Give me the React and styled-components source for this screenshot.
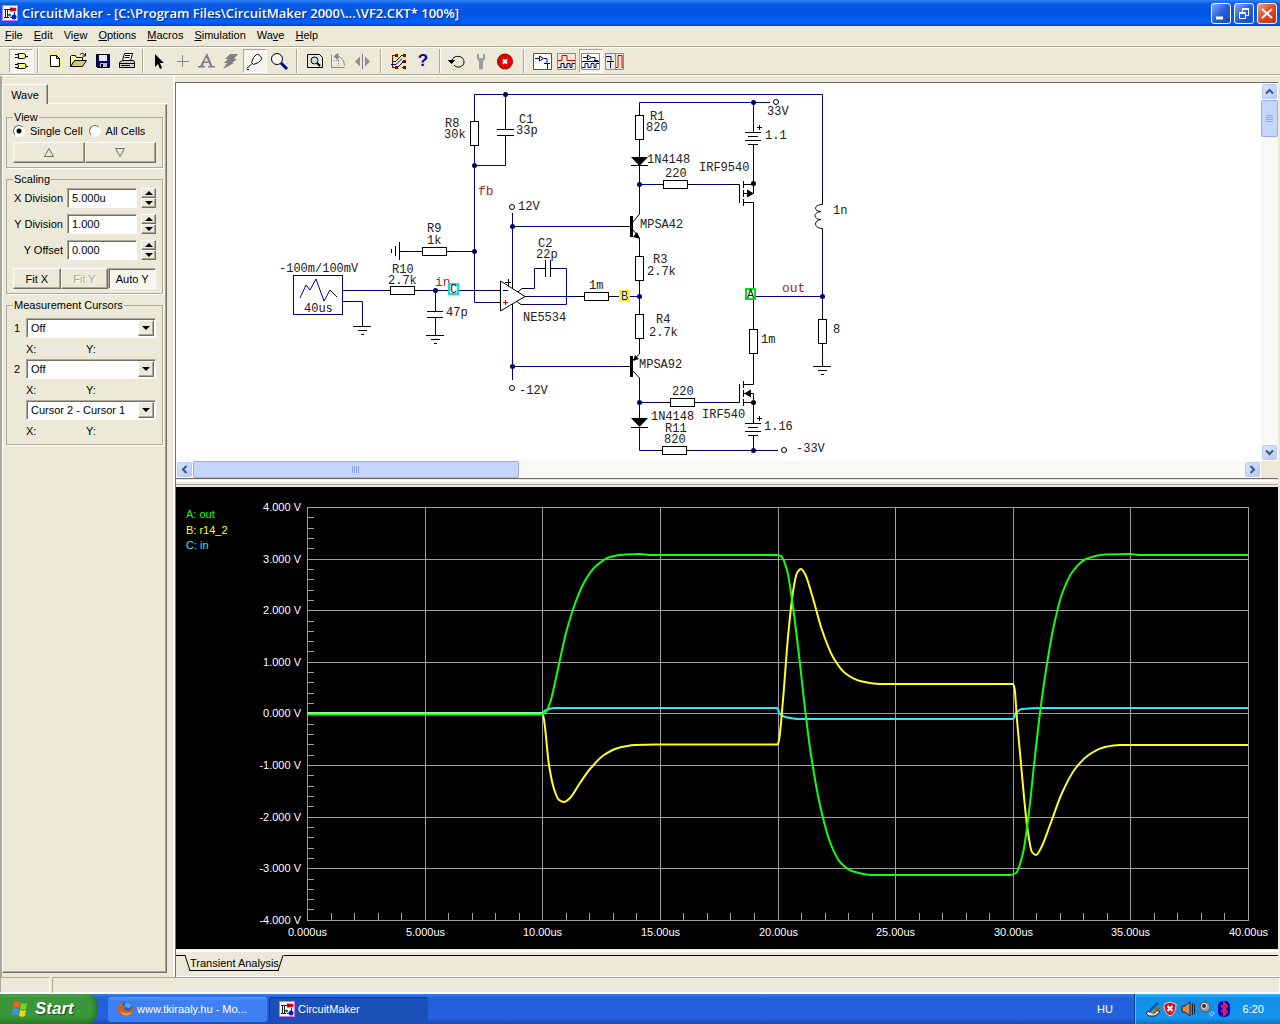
import { useState } from 'react';
import styled, { createGlobalStyle, css } from 'styled-components';

const MENUS = [
    ['', 'F', 'ile'], ['', 'E', 'dit'], ['Vi', 'e', 'w'], ['', 'O', 'ptions'],
    ['', 'M', 'acros'], ['', 'S', 'imulation'], ['Wa', 'v', 'e'], ['', 'H', 'elp'],
];

/* ---------- toolbar icons ---------- */

const ICONS = {
    gates: (
        <g fill="#ffff80" stroke="#000">
            <path d="M7.500 2.500h5l2 1v3l-2 1h-5zM6.500 12.500h7l1.500 1v3l-1.500 1h-7l1-2.500z" />
            <path d="M4 3.500h3M4 6.500h3M15 5.500h2M4 13.500h3M4 16.500h3M15 15.500h2" />
        </g>
    ),
    new: (
        <g>
            <path d="M3 3l3 3M10 1v3M17 4l-2 2M2 10h3M18 11h-3M4 17l2-2M16 17l-2-2" stroke="#ffff30" strokeWidth="2" />
            <path d="M5.500 4.500h6l3 3v8h-9zM11.500 4.500v3h3" fill="#fff" stroke="#000" />
        </g>
    ),
    open: (
        <g stroke="#000">
            <path d="M1.500 15.500v-10l1-1h4l1 2h6v3" fill="#ffff90" />
            <path d="M1.500 15.500l4-6h12l-4 6z" fill="#d8c860" />
            <path d="M11 3.500c2-2 4-1 5 1M16.500 2v3h-3" fill="none" />
        </g>
    ),
    save: (
        <g>
            <path d="M3.500 3.500h13v13h-12l-1-1z" fill="#000090" stroke="#000" />
            <path d="M6 4h8v6H6z" fill="#e8e8e8" />
            <path d="M7 12h7v4H7z" fill="#c0c0c0" />
            <path d="M8 13h2v3H8z" fill="#000" />
        </g>
    ),
    print: (
        <g stroke="#000">
            <path d="M5.500 9.500l2-7h8l-2 7z" fill="#fff" />
            <path d="M8 4.500h5M7.500 6.500h5" />
            <path d="M2.500 11.500l3-2h11l1 2v5h-15z" fill="#d4d0c8" />
            <path d="M2.500 12.500h15M4 14.500h9" fill="none" />
        </g>
    ),
    arrow: <path d="M6 3v13l3-3 2 5 2-1-2-5h4z" fill="#000" />,
    plus: <path d="M9.500 4v12M4 10.500h12" stroke="#888" />,
    text: <path d="M10 2l5.500 13H18v1.500h-7V15h2l-1-3H7l-1 3h2v1.500H1V15h2zM9 6.500L7.500 10.500h4z" fill="#808080" fillRule="evenodd" />,
    bolt: <path d="M9 3h8l-4 5h3l-5 4h2L2 18l4-6H3l4-4H4z" fill="#808080" />,
    probe: (
        <g fill="none" stroke="#000">
            <path d="M2 17.500l5-5M6.500 11.500l2 2 5-2 3-3c1-2-3-6-5-5l-3 3z" />
            <path d="M2 18.500h2" />
        </g>
    ),
    zoom: (
        <g>
            <circle cx="8" cy="8" r="5.500" fill="#f8f8f0" stroke="#000" />
            <path d="M12 12l6 6" stroke="#0000a0" strokeWidth="3" />
        </g>
    ),
    page: (
        <g fill="none" stroke="#000">
            <path d="M2.500 3.500h12l3 3v10h-15z" />
            <circle cx="9.500" cy="9.500" r="3.500" fill="#c8e0e0" />
            <path d="M12 12l3 3" strokeWidth="2" />
        </g>
    ),
    rotate: (
        <g fill="none" stroke="#888">
            <path d="M2.500 3.500v13M2.500 16.500h13M5 5.500h4c4 1 6 4 6.500 9" />
            <path d="M5 5.500l4-3v6z" fill="#888" />
            <path d="M5 9.500h5M9.500 10v6" strokeDasharray="1 1" />
        </g>
    ),
    mirror: (
        <g>
            <path d="M2 10.500l5-5v10zM17 10.500l-5-5v10z" fill="#909090" />
            <path d="M9.500 3v15" stroke="#808080" />
        </g>
    ),
    digital: (
        <g fill="none">
            <path d="M3 4h13M3 10h13M3 16h13" stroke="#ffff40" strokeWidth="5" opacity=".5" />
            <path d="M3 4.500h4M3 10.500h4M3 16.500h4M13 4.500h3M13 10.500h3M13 16.500h3M3.500 4v13" stroke="#900000" />
            <path d="M2 13.500h5l6-6M7 10l6-6M9 16l5-5" stroke="#0000a0" />
            <path d="M6 3h3v3H6zM14 3h3v3h-3zM14 9h3v3h-3zM14 15h3v3h-3zM6 15h3v3H6z" fill="#900000" />
        </g>
    ),
    reset: (
        <g fill="none" stroke="#000">
            <path d="M5 11c-1-7 12-8 12 0 0 5-7 7-10 3" />
            <path d="M1.500 9.500h6l-3 3z" fill="#000" />
        </g>
    ),
    wrench: <path d="M6 3v5l2 2.500V17c0 2 4 2 4 0v-6.500L14 8V3h-2v4H8V3z" fill="#a0a09a" />,
    stop: (
        <g>
            <circle cx="10" cy="10.500" r="7.500" fill="#e80000" stroke="#900000" />
            <path d="M8 8.500l4 4M12 8.500l-4 4" stroke="#fff" strokeWidth="2" />
        </g>
    ),
    scopeA: (
        <g fill="#fff" stroke="#000080">
            <path d="M.500 2.500h18v16H.500z" stroke="#555" />
            <path d="M2 7.500h4M6.500 5v5l4-2.500zM11 7.500h3v4M11 12.500h6M13 11.500v1M14.500 13v5" />
        </g>
    ),
    scopeB: (
        <g fill="none">
            <path d="M.500 2.500h18v16H.500z" stroke="#888" />
            <path d="M1 9.500h4v-5h5v5h8" stroke="#d00000" />
            <path d="M1 16.500h3v-4h3v4h3v-4h3v4h2v-4h3" stroke="#000080" />
        </g>
    ),
    scopeC: (
        <g fill="none" stroke="#000080">
            <path d="M.500 2.500h18v16H.500z" stroke="#888" fill="#fff" />
            <path d="M2 6.500h4M6.500 4v5l4-2.500zM11 6.500h3v3M1 10.500h17M13 9.500h4M1 16.500h3v-4h3v4h3v-4h3v4h2v-4h3" />
        </g>
    ),
    scopeD: (
        <g fill="none">
            <path d="M.500 2.500h18v16H.500zM10.500 2v17" stroke="#888" />
            <path d="M1 5.500h5v4M2 10.500h7M5.500 11v6" stroke="#000080" />
            <path d="M11 16.500h2v-12h4v12h1" stroke="#d00000" />
        </g>
    ),
};

// each group: space taken by the separator before it, then its buttons
const TOOL_GROUPS = [
    { space: 0, tools: [['gates', true]] },
    { space: 10, tools: [['new'], ['open'], ['save'], ['print']] },
    { space: 8, tools: [['arrow'], ['plus'], ['text'], ['bolt'], ['probe', true], ['zoom']] },
    { space: 12, tools: [['page'], ['rotate'], ['mirror']] },
    { space: 12, tools: [['digital'], ['help']] },
    { space: 10, tools: [['reset'], ['wrench'], ['stop']] },
    { space: 14, tools: [['scopeA'], ['scopeB'], ['scopeC', true], ['scopeD']] },
];

function AppIcon() {
    return (
        <svg width="16" height="16" viewBox="0 0 16 16">
            <path d="M.500.500h15v15H.500z" fill="#fff" stroke="#e070d0" />
            <path d="M2 4.500h7M3.500 4v8M5.500 5v7M2 12.500h5" stroke="#222" fill="none" />
            <path d="M8 2.500h2c3 0 3 4 0 4H8z" fill="#c00020" />
            <circle cx="12.500" cy="4.500" r="2" fill="#e00020" />
            <circle cx="7.500" cy="10" r="1.500" fill="#008040" />
            <circle cx="12" cy="12" r="2.500" fill="#0020d0" />
            <path d="M8 12.500h3M12.500 7v3" stroke="#0020d0" />
        </svg>
    );
}

function ToolIcon({ name }) {
    if (name === 'help') return <HelpMark>?</HelpMark>;
    return <svg width="20" height="20" viewBox="0 0 20 20">{ICONS[name]}</svg>;
}

/* ---------- circuit ---------- */

const WIRES = [
    'M474.500 115V94.500H822.500V198', 'M505.500 94V122', 'M505.500 143V165.500H474.500', 'M474.500 152V302.500H494',
    'M407 251.500H416M453 251.500H474', 'M512.500 213V282M512.500 309V380', 'M512.500 226.500H618M512.500 366.500H622',
    'M343 290.500H384M421 290.500H494', 'M349 301.500H362.500V320', 'M435.500 290V305M435.500 323V331',
    'M527 288.500H534.500V268.500H540M555 268.500H566.500V304.500H528', 'M530 296.500H575M616 296.500H639',
    'M639.500 109V102.500H770', 'M639.500 145V152M639.500 171V214', 'M640 184.500H657M694 184.500H730',
    'M753.500 102V124M753.500 150V176M753.500 208V323M753.500 359V376', 'M639.500 245V251M639.500 286V308M639.500 345V349',
    'M756 296.500H822', 'M822.500 233V314M822.500 350V360', 'M639.500 384V412M639.500 433V450.500H656',
    'M640 402.500H664M700 402.500H730', 'M693 450.500H778', 'M753.500 408V416M753.500 440V450',
];

const LEADS = [
    // capacitors
    'M505.500 122V129M497 129.500H514M497 135.500H514M505.500 136V143',
    'M435.500 305V311M427 311.500H443M427 317.500H443M435.500 318V323',
    'M540 268.500H545M545.500 260V277M550.500 260V277M551 268.500H555',
    // grounds
    'M407 251.500H399M399.500 242V260M395.500 246V256M391.500 249V253',
    'M362.500 320V326M353 326.500H371M358 330.500H367M361 334.500H364',
    'M435.500 331V335M426 335.500H444M431 339.500H440M434 343.500H437',
    'M822.500 360V366M813 366.500H831M818 370.500H827M821 374.500H824',
    // resistor leads
    'M474.500 115V121M474.500 146V152', 'M416 251.500H422M447 251.500H453', 'M384 290.500H390M415 290.500H421',
    'M639.500 109V115M639.500 139V145', 'M657 184.500H663M688 184.500H694', 'M639.500 251V256M639.500 281V286',
    'M575 296.500H584M609 296.500H616', 'M639.500 308V314M639.500 339V345', 'M753.500 323V329M753.500 354V359',
    'M822.500 314V319M822.500 344V350', 'M664 402.500H670M695 402.500H700', 'M656 450.500H662M687 450.500H693',
    // op amp
    'M500.500 281V311L525 296.500Z', 'M494 290.500H500M494 302.500H500M343 301.500H349M525 296.500H530',
    'M512.500 282V288M512.500 304V309M505 282.500H511M508.500 279V286', 'M518 292L522 288.500H527M516 301L521 304.500H528',
    // diodes
    'M639.500 152V157M631 165.500H648M639.500 166V171', 'M639.500 412V418M631 427.500H648M639.500 428V433',
    // transistors
    'M618 226.500H631M633 222L639.500 214M633 230L639.500 238V245', 'M622 366.500H631M633 360L639.500 354V349M633 371L639.500 378V384',
    // mosfets
    'M730 184.500H739.500V203M743.500 181V188M743.500 190V197M743.500 199V206M743 184.500H753.500V193.500H743M743 202.500H753.500V208M753.500 176V184',
    'M730 402.500H739.500V384M743.500 381V388M743.500 390V397M743.500 399V406M753.500 376V384.500H743M743 393.500H753.500V408M743 402.500H753',
    // batteries
    'M753.500 124V132M745 132.500H761M748 136.500H758M745 140.500H761M748 144.500H758M753.500 145V150M757 127.500H762M759.500 125V130',
    'M753.500 416V423M745 423.500H761M748 427.500H758M745 431.500H761M748 435.500H758M753.500 436V440M757 418.500H762M759.500 416V421',
    // inductor
    'M822.500 198V204.500C814 204.500 813 211.500 821 211.500M821 211.500C813 212.500 813 219.500 821 219.500M821 219.500C813 220.500 814 228.500 822.500 228.500V233',
];

const RESISTORS = [
    [470, 121, 0], [422, 247, 1], [390, 286, 1], [635, 115, 0], [663, 180, 1], [635, 256, 0], [584, 292, 1],
    [635, 314, 0], [749, 329, 0], [818, 319, 0], [670, 398, 1], [662, 446, 1],
];

const NODES = [
    [505, 94], [474, 165], [474, 251], [512, 226], [512, 366], [435, 290], [753, 102],
    [639, 184], [639, 296], [822, 296], [639, 402], [753, 450],
];

const TERMINALS = [[512, 207], [512, 388], [776, 102], [784, 450]];

const PARTS = [
    ['R8', 445, 127], ['30k', 444, 138], ['C1', 519, 123], ['33p', 516, 134], ['12V', 518, 210],
    ['R9', 427, 232], ['1k', 427, 244], ['C2', 538, 247], ['22p', 536, 258], ['-100m/100mV', 279, 272],
    ['R10', 392, 273], ['2.7k', 388, 284], ['40us', 304, 312], ['47p', 446, 316], ['NE5534', 523, 321],
    ['-12V', 519, 394], ['R1', 650, 120], ['820', 646, 131], ['33V', 767, 115], ['1.1', 765, 139],
    ['1N4148', 647, 163], ['220', 665, 177], ['IRF9540', 699, 171], ['MPSA42', 640, 228], ['1n', 833, 214],
    ['R3', 653, 263], ['2.7k', 647, 275], ['1m', 589, 289], ['R4', 656, 323], ['2.7k', 649, 336],
    ['MPSA92', 639, 368], ['1m', 761, 343], ['8', 833, 333], ['220', 672, 395], ['1N4148', 651, 420],
    ['IRF540', 702, 418], ['1.16', 764, 430], ['R11', 665, 432], ['820', 664, 443], ['-33V', 796, 452],
];

const NETS = [['fb', 478, 195], ['in', 435, 286], ['out', 782, 292]];
const PROBES = [['C', 449, 284, '#00e0f0'], ['B', 620, 291, '#f8f020'], ['A', 746, 289, '#00e020']];

function Schematic() {
    return (
        <Sheet width="1085" height="378" viewBox="176 83 1085 378">
            <path d={WIRES.join('')} stroke="#00008b" fill="none" />
            <path d={LEADS.join('')} stroke="#000" fill="none" />
            {RESISTORS.map(([x, y, flat]) => (
                <rect key={`${x}-${y}`} x={x + 0.5} y={y + 0.5} width={flat ? 24 : 8} height={flat ? 8 : 24} fill="#fff" stroke="#000" />
            ))}
            <rect x="293.500" y="275.500" width="49" height="39" fill="none" stroke="#00008b" />
            <path d="M300 298l6-13 4 5 6-11 8 22 6-11 7 7" fill="none" stroke="#00008b" />
            <path d="M631 157h17l-8.500 9zM631 418h17l-8.500 9z" />
            <path d="M630 216h3v21h-3zM630 356h3v21h-3z" />
            <path d="M640 239l-7-2 4-5zM633 361l2-6 4 4zM754 193.500l-7-4v8zM744 393.500l7-4v8z" />
            <path d="M503 290.500h5" stroke="#0000c0" />
            <path d="M503 302.500h5M505.500 300v5" stroke="#d00000" />
            {NODES.map(([x, y]) => <circle key={`${x}-${y}`} cx={x + 0.5} cy={y + 0.5} r="2.500" fill="#000060" />)}
            <circle cx="753.500" cy="183.500" r="2.500" />
            <circle cx="753.500" cy="402.500" r="2.500" />
            {TERMINALS.map(([x, y]) => <circle key={`${x}-${y}`} cx={x} cy={y} r="2.500" fill="#fff" stroke="#000" />)}
            {PARTS.map(([label, x, y]) => <PartLabel key={`${x}-${y}`} x={x} y={y}>{label}</PartLabel>)}
            {NETS.map(([label, x, y]) => <NetLabel key={label} x={x} y={y}>{label}</NetLabel>)}
            {PROBES.map(([label, x, y, color]) => (
                <g key={label}>
                    <rect x={x} y={y} width="9" height="10" fill="#fff" stroke={color} strokeWidth="2" />
                    <PartLabel x={x + 1} y={y + 9}>{label}</PartLabel>
                </g>
            ))}
        </Sheet>
    );
}

/* ---------- transient plot ---------- */

const TRACES = [
    {
        name: 'A: out', color: '#10ff10', y: 518,
        points: [[307, 714.5], [540, 714.5], [545, 713], [550, 703], [556, 678], [566, 633], [576, 601], [586, 579], [596, 566], [610, 557], [625, 554.5], [640, 554], [650, 555], [776, 555], [781, 556], [787, 570], [793, 607], [799, 655], [804, 700], [811, 755], [820, 805], [830, 842], [840, 862], [852, 871], [872, 875], [1010, 875], [1016, 873], [1023, 853], [1029, 812], [1034, 765], [1040, 713], [1046, 670], [1054, 625], [1062, 594], [1073, 571], [1086, 559], [1105, 554.5], [1130, 554], [1140, 555], [1248, 555]],
    },
    {
        name: 'B: r14_2', color: '#ffff20', y: 534,
        points: [[307, 713.5], [542, 713.5], [543.5, 717], [549, 765], [554, 789], [559, 800], [564, 802], [570, 798], [580, 783], [590, 769], [604, 755], [618, 748], [635, 745], [655, 744.5], [777.5, 744.5], [779, 740], [783, 700], [788, 637], [793, 592], [797, 573], [801, 569], [805, 574], [812, 595], [822, 630], [833, 657], [845, 673], [860, 681], [880, 684], [1013, 684], [1014.5, 688], [1017, 720], [1022, 775], [1027, 825], [1032, 852], [1036, 855], [1041, 848], [1050, 825], [1062, 793], [1075, 769], [1090, 754], [1105, 747], [1120, 745], [1248, 745]],
    },
    {
        name: 'C: in', color: '#20f0ff', y: 549,
        points: [[307, 713], [542, 713], [546, 710], [555, 708], [777, 708], [780, 714], [785, 717], [800, 719], [1013, 719], [1016, 713], [1022, 709], [1040, 708], [1248, 708]],
    },
];

const gridX = (i) => Math.round(307 + i * 117.625) + 0.5;
const gridY = (i) => Math.round(507 + i * 51.6) + 0.5;

// monotone cubic through the samples, so flat parts stay flat
function curve(points) {
    const slope = (a, b) => (b[1] - a[1]) / (b[0] - a[0]);
    const tangents = points.map((p, i) => {
        if (i === 0 || i === points.length - 1) return 0;
        const before = slope(points[i - 1], p);
        const after = slope(p, points[i + 1]);
        return before * after <= 0 ? 0 : (2 * before * after) / (before + after);
    });
    return points.slice(1).reduce((d, p, i) => {
        const q = points[i];
        const h = (p[0] - q[0]) / 3;
        return `${d}C${q[0] + h} ${q[1] + tangents[i] * h} ${p[0] - h} ${p[1] - tangents[i + 1] * h} ${p[0]} ${p[1]}`;
    }, `M${points[0][0]} ${points[0][1]}`);
}

function TransientPlot() {
    const steps = [...Array(9).keys()];
    const ticks = [...Array(41).keys()];
    return (
        <Plot viewBox="176 487 1102 462">
            <g stroke="#a0a0a0" fill="none">
                {steps.map((i) => <path key={i} d={`M${gridX(i)} 507V920M307 ${gridY(i)}H1249`} />)}
                {ticks.map((i) => <path key={i} d={`M${gridX(i / 5)} 913V920M307 ${gridY(i / 5)}H314`} />)}
            </g>
            {steps.map((i) => <AxisLabel key={i} $end x="301" y={gridY(i) + 3.5}>{`${(4 - i).toFixed(3)} V`}</AxisLabel>)}
            {steps.map((i) => <AxisLabel key={i} x={gridX(i)} y="936">{`${(i * 5).toFixed(i > 1 ? 2 : 3)}us`}</AxisLabel>)}
            {[2, 1, 0].map((i) => (
                <path key={i} d={curve(TRACES[i].points)} fill="none" stroke={TRACES[i].color} strokeWidth="2" />
            ))}
            {TRACES.map((t) => <Legend key={t.name} x="186" y={t.y} fill={t.color}>{t.name}</Legend>)}
        </Plot>
    );
}

/* ---------- side panel ---------- */

function Division({ id, label, value }) {
    return (
        <DivisionRow>
            <label htmlFor={id}>{label}</label>
            <ValueInput id={id} defaultValue={value} />
            <Spinner>
                <SpinButton aria-label={`${label} up`}><Triangle $up /></SpinButton>
                <SpinButton aria-label={`${label} down`}><Triangle /></SpinButton>
            </Spinner>
        </DivisionRow>
    );
}

function CursorPick({ mark, name, value }) {
    return (
        <>
            <label htmlFor={name}>{mark}</label>
            <Combo>
                <select id={name} aria-label={name} defaultValue={value}>
                    <option>{value}</option>
                </select>
                <ComboArrow><Triangle /></ComboArrow>
            </Combo>
            <Readout><span>X:</span><span>Y:</span></Readout>
        </>
    );
}

function SidePanel() {
    const [cells, setCells] = useState('single');
    return (
        <Side>
            <SideTabs><SideTab>Wave</SideTab><TabRest /></SideTabs>
            <SideBody>
                <Group>
                    <legend>View</legend>
                    <RadioRow>
                        <label><Radio name="cells" checked={cells === 'single'} onChange={() => setCells('single')} />Single Cell</label>
                        <label><Radio name="cells" checked={cells === 'all'} onChange={() => setCells('all')} />All Cells</label>
                    </RadioRow>
                    <ButtonRow>
                        <PanelButton aria-label="Previous"><Glyph viewBox="0 0 10 9"><path d="M.500 8.500h9L5 .500z" /></Glyph></PanelButton>
                        <PanelButton aria-label="Next"><Glyph viewBox="0 0 10 9"><path d="M.500.500h9L5 8.500z" /></Glyph></PanelButton>
                    </ButtonRow>
                </Group>
                <Group>
                    <legend>Scaling</legend>
                    <Divisions>
                        <Division id="xdiv" label="X Division" value="5.000u" />
                        <Division id="ydiv" label="Y Division" value="1.000" />
                        <Division id="yoff" label="Y Offset" value="0.000" />
                    </Divisions>
                    <ButtonRow>
                        <PanelButton>Fit X</PanelButton>
                        <PanelButton disabled>Fit Y</PanelButton>
                        <PanelButton $pressed>Auto Y</PanelButton>
                    </ButtonRow>
                </Group>
                <Group>
                    <legend>Measurement Cursors</legend>
                    <Cursors>
                        <CursorPick mark="1" name="Cursor 1" value="Off" />
                        <CursorPick mark="2" name="Cursor 2" value="Off" />
                        <CursorPick mark="" name="Difference" value="Cursor 2 - Cursor 1" />
                    </Cursors>
                </Group>
            </SideBody>
        </Side>
    );
}

/* ---------- task bar drawings ---------- */

function Flag() {
    return (
        <svg width="20" height="20" viewBox="0 0 20 20">
            <path d="M4 3c2-1 4-1 6 0L9 9c-2-1-4-1-6 0z" fill="#f06020" />
            <path d="M11 4c2 1 4 1 6 0l-1 6c-2 1-4 1-6 0z" fill="#80d020" />
            <path d="M3 10c2-1 4-1 6 0l-1 6c-2-1-4-1-6 0z" fill="#4090f8" />
            <path d="M10 11c2 1 4 1 6 0l-1 6c-2 1-4 1-6 0z" fill="#f8d020" />
        </svg>
    );
}

function Firefox() {
    return (
        <svg width="16" height="16" viewBox="0 0 16 16">
            <circle cx="8" cy="8" r="7" fill="#2868b8" />
            <path d="M7 2c4-1 6 1 7 3l-3 2-4-1z" fill="#48a8e8" />
            <path d="M1 4c-3 7 2 11 7 11 5 0 8-5 7-10-1 4-4 6-7 5-2-1-3-3-1-4L4 4 3 1z" fill="#e85c10" />
            <path d="M2 9c2 4 8 5 12 1-2 6-10 6-12-1z" fill="#f8b020" />
        </svg>
    );
}

function TrayIcons() {
    return (
        <svg width="88" height="18" viewBox="0 0 88 18">
            <path d="M1 13l8-5 6 4-5 4H4z" fill="#f0f0f0" stroke="#222" />
            <path d="M4 12l9-9" stroke="#2040e0" strokeWidth="3" />
            <path d="M6 13l8-8" stroke="#20b040" strokeWidth="2" />
            <path d="M8 14l6-6" stroke="#e03020" strokeWidth="2" />
            <path d="M25 2l6 2c0 7-2 10-6 12-4-2-6-5-6-12z" fill="#d01818" stroke="#f0d0d0" />
            <path d="M22.500 6l5 5M27.500 6l-5 5" stroke="#fff" strokeWidth="2" />
            <path d="M37 6h3l5-4v14l-5-4h-3z" fill="#f08040" stroke="#222" />
            <path d="M47.500 3v12M49.500 4v10" stroke="#222" />
            <circle cx="60" cy="7" r="5" fill="#a0a0a0" stroke="#505050" />
            <circle cx="59" cy="6" r="2.500" fill="#303030" stroke="#e8e8e8" />
            <path d="M64 14c2 0 3-1 3-3M65 16c3 0 4-2 4-4" stroke="#c0d8f8" fill="none" />
            <rect x="73" y="1" width="12" height="16" rx="5" fill="#0000c0" />
            <path d="M76 5l6 7-3 3V2.500L82 6l-6 6" stroke="#e02040" strokeWidth="2" fill="none" />
        </svg>
    );
}

function Chevron({ turn }) {
    return (
        <svg width="9" height="9" viewBox="0 0 9 9">
            <path d="M1 6.500L4.500 3 8 6.500" transform={`rotate(${turn} 4.500 4.500)`} fill="none" stroke="#3c5680" strokeWidth="2" />
        </svg>
    );
}

function App() {
    return (
        <Window>
            <GlobalStyle />
            <TitleBar>
                <AppIcon />
                <Title>CircuitMaker - [C:\Program Files\CircuitMaker 2000\...\VF2.CKT* 100%]</Title>
                <CaptionButton aria-label="Minimize"><svg width="18" height="19"><path d="M4 14h7" stroke="#fff" strokeWidth="3" /></svg></CaptionButton>
                <CaptionButton aria-label="Restore">
                    <svg width="18" height="19" fill="none" stroke="#fff"><path d="M4.500 9.500h6v5h-6zM4 8.500h7M7.500 8V5.500h6v6H11M7 4.500h7" /></svg>
                </CaptionButton>
                <CaptionButton $close aria-label="Close"><svg width="18" height="19"><path d="M4 5l10 9M14 5L4 14" stroke="#fff" strokeWidth="2" /></svg></CaptionButton>
            </TitleBar>
            <MenuBar>
                {MENUS.map(([a, key, b]) => <MenuItem key={a + key + b}>{a}<u>{key}</u>{b}</MenuItem>)}
            </MenuBar>
            <Toolbar>
                {TOOL_GROUPS.map(({ space, tools }) => (
                    <ToolGroup key={tools[0][0]}>
                        {space > 0 && <Separator $space={space} />}
                        {tools.map(([name, on]) => (
                            <ToolButton key={name} $on={on} aria-label={name}><ToolIcon name={name} /></ToolButton>
                        ))}
                    </ToolGroup>
                ))}
            </Toolbar>
            <Workspace>
                <SidePanel />
                <Documents>
                    <Canvas>
                        <Schematic />
                        <VScroll>
                            <ScrollButton aria-label="Scroll up"><Chevron turn={0} /></ScrollButton>
                            <VThumb><i /><i /><i /><i /></VThumb>
                            <ScrollFill />
                            <ScrollButton aria-label="Scroll down"><Chevron turn={180} /></ScrollButton>
                        </VScroll>
                    </Canvas>
                    <BottomScroll>
                        <HScroll>
                            <ScrollButton aria-label="Scroll left"><Chevron turn={-90} /></ScrollButton>
                            <HThumb><i /><i /><i /><i /></HThumb>
                            <ScrollFill />
                            <ScrollButton aria-label="Scroll right"><Chevron turn={90} /></ScrollButton>
                        </HScroll>
                    </BottomScroll>
                    <Splitter />
                    <TransientPlot />
                    <SheetTabs>
                        <SheetEdge />
                        <SheetTab>Transient Analysis</SheetTab>
                        <SheetRest />
                    </SheetTabs>
                </Documents>
            </Workspace>
            <StatusBar><StatusCell $small /><StatusCell /></StatusBar>
            <TaskBar>
                <StartButton><Flag />Start</StartButton>
                <TaskButton><Firefox />www.tkiraaly.hu - Mo...</TaskButton>
                <TaskButton $active><AppIcon />CircuitMaker</TaskButton>
                <Language>HU</Language>
                <Tray><TrayIcons /><span>6:20</span></Tray>
            </TaskBar>
        </Window>
    );
}

export default App;

const GlobalStyle = createGlobalStyle`
    * { box-sizing: border-box; }
    body { margin: 0; background: #ece9d8; }
    button, input, select { font: inherit; color: inherit; margin: 0; padding: 0; border: 0; border-radius: 0; }
    svg { display: block; flex: none; }
`;

const raised = css`
    border: 1px solid;
    border-color: #fff #716f64 #716f64 #fff;
    box-shadow: inset -1px -1px #aca899;
`;

const sunken = css`
    border: 1px solid;
    border-color: #aca899 #fff #fff #aca899;
    box-shadow: inset 1px 1px #716f64;
`;

const Window = styled.div`
    display: flex;
    flex-direction: column;
    height: 100vh;
    font-family: "Liberation Sans", Arial, sans-serif;
    font-size: 11px;
    line-height: 12px;
    color: #000;
    background: #ece9d8;
`;

const TitleBar = styled.header`
    display: flex;
    align-items: center;
    gap: 3px;
    flex: none;
    height: 26px;
    padding: 0 3px 0 2px;
    background: linear-gradient(#2f86f6 0, #0a5ae4 4px, #0054e3 14px, #0062fb 22px, #0046c8);
`;

const Title = styled.h1`
    flex: 1;
    margin: 0 0 0 1px;
    font-family: "Open Sans", "Noto Sans", sans-serif;
    font-size: 13px;
    font-weight: 600;
    line-height: 20px;
    color: #fff;
    text-shadow: 1px 1px #0a2a8c;
    white-space: nowrap;
`;

const CaptionButton = styled.button`
    width: 20px;
    height: 21px;
    border: 1px solid #fff;
    border-radius: 3px;
    background: ${(p) => (p.$close
        ? 'linear-gradient(135deg, #f0a080, #e04820 50%, #c03408)'
        : 'linear-gradient(135deg, #80a8f8, #2a5fdc 50%, #1848c0)')};
`;

const MenuBar = styled.nav`
    display: flex;
    gap: 11px;
    flex: none;
    height: 21px;
    padding: 2px 5px 0;
    border-bottom: 1px solid #aca899;
`;

const MenuItem = styled.button`
    height: 14px;
    background: none;
`;

const Toolbar = styled.div`
    display: flex;
    flex: none;
    height: 28px;
    padding: 1px 9px;
    border-top: 1px solid #fff;
    border-bottom: 1px solid #aca899;
`;

const ToolGroup = styled.div`
    display: flex;
    align-items: center;
`;

const Separator = styled.div`
    width: ${(p) => p.$space}px;
    height: 24px;
    background: linear-gradient(90deg, #aca899 1px, #fff 1px) center / 2px 24px no-repeat;
`;

const ToolButton = styled.button`
    display: flex;
    align-items: center;
    justify-content: center;
    width: 24px;
    height: 24px;
    background: ${(p) => (p.$on ? '#f6f5ee' : 'none')};
    border: 1px solid transparent;
    ${(p) => p.$on && 'border-color: #aca899 #fff #fff #aca899;'}
`;

const HelpMark = styled.span`
    font-size: 17px;
    font-weight: bold;
    color: #0000a0;
`;

const Workspace = styled.main`
    display: flex;
    flex: 1;
    min-height: 0;
    border-top: 1px solid #fff;
    padding-right: 2px;
`;

const Side = styled.aside`
    display: flex;
    flex-direction: column;
    flex: none;
    width: 175px;
    padding: 8px 6px 4px 0;
    border-left: 2px solid #aca899;
    border-right: 2px solid #fff;
`;

const SideTabs = styled.div`
    display: flex;
    height: 20px;
`;

const SideTab = styled.button`
    width: 46px;
    background: none;
    border: 1px solid #fff;
    border-right-color: #716f64;
    border-bottom: 0;
    box-shadow: inset -1px 0 #aca899;
`;

const TabRest = styled.div`
    flex: 1;
    border-bottom: 1px solid #fff;
`;

const SideBody = styled.div`
    display: flex;
    flex: 1;
    flex-direction: column;
    gap: 5px;
    padding: 6px 3px 0;
    border: 1px solid;
    border-color: transparent #716f64 #716f64 #fff;
    box-shadow: inset -1px -1px #aca899;
`;

const Group = styled.fieldset`
    display: block;
    min-width: 0;
    margin: 0;
    padding: 0 6px 4px;
    border: 1px solid #aca899;
    box-shadow: 1px 1px #fff;

    legend {
        padding: 0 1px;
    }
`;

const RadioRow = styled.div`
    display: flex;
    gap: 6px;
    height: 19px;
    padding-top: 1px;

    label {
        display: flex;
        align-items: center;
        gap: 5px;
        height: 14px;
        white-space: nowrap;
    }
`;

const Radio = styled.input.attrs({ type: 'radio' })`
    appearance: none;
    width: 12px;
    height: 12px;
    border: 1px solid;
    border-color: #716f64 #fff #fff #716f64;
    border-radius: 50%;
    background: #fff;

    &:checked {
        background: radial-gradient(circle, #000 2px, #fff 3px);
    }
`;

const ButtonRow = styled.div`
    display: flex;
`;

const PanelButton = styled.button`
    display: flex;
    align-items: center;
    justify-content: center;
    flex: 1;
    height: 21px;
    background: #ece9d8;
    ${raised}
    ${(p) => p.$pressed && css`${sunken} background: #f6f5ee;`}

    &:disabled {
        color: #aca899;
        text-shadow: 1px 1px #fff;
    }
`;

const Glyph = styled.svg`
    width: 10px;
    height: 9px;
    fill: none;
    stroke: #716f64;
`;

const Divisions = styled.div`
    display: grid;
    gap: 6px;
    padding: 3px 0 8px;
`;

const DivisionRow = styled.div`
    display: grid;
    grid-template-columns: 50px 1fr 15px;
    align-items: center;
    column-gap: 4px;
    height: 20px;

    label {
        text-align: right;
        white-space: nowrap;
    }
`;

const ValueInput = styled.input`
    width: 100%;
    height: 20px;
    padding: 0 4px;
    background: #fff;
    ${sunken}
`;

const Spinner = styled.div`
    display: grid;
    grid-template-rows: 10px 10px;
`;

const SpinButton = styled.button`
    display: flex;
    align-items: center;
    justify-content: center;
    background: #ece9d8;
    ${raised}
`;

const Triangle = styled.span`
    border: 4px solid transparent;
    border-width: ${(p) => (p.$up ? '0 4px 4px' : '4px 4px 0')};
    border-color: ${(p) => (p.$up ? 'transparent transparent #000' : '#000 transparent transparent')};
`;

const Cursors = styled.div`
    display: grid;
    grid-template-columns: 12px 1fr;
    align-items: center;
    row-gap: 1px;
    padding: 7px 0 0 1px;
`;

const Combo = styled.div`
    display: flex;
    height: 20px;
    padding: 1px;
    background: #fff;
    ${sunken}

    select {
        flex: 1;
        min-width: 0;
        padding-left: 3px;
        background: none;
        appearance: none;
    }
`;

const ComboArrow = styled.span`
    display: flex;
    align-items: center;
    justify-content: center;
    width: 16px;
    background: #ece9d8;
    pointer-events: none;
    ${raised}
`;

const Readout = styled.div`
    display: grid;
    grid-column: 2;
    grid-template-columns: 60px 1fr;
    align-items: center;
    height: 19px;
`;

const Documents = styled.section`
    display: flex;
    flex: 1;
    flex-direction: column;
    min-width: 0;
    margin-top: 6px;
    border-top: 1px solid #716f64;
    border-left: 1px solid #716f64;
`;

const Canvas = styled.div`
    display: flex;
    flex: none;
    overflow: hidden;
    background: #fff;
`;

const Sheet = styled.svg`
    flex: 1 1 0;
    min-width: 0;
`;

const PartLabel = styled.text`
    font-family: "Liberation Mono", "Courier New", monospace;
    font-size: 12px;
    fill: #202020;
`;

const NetLabel = styled(PartLabel)`
    font-size: 13px;
    fill: #a02828;
`;

const VScroll = styled.div`
    display: flex;
    flex: none;
    flex-direction: column;
    width: 17px;
    background: #f8f8f4;
`;

const BottomScroll = styled.div`
    flex: none;
    height: 17px;
    padding-right: 17px;
`;

const HScroll = styled.div`
    display: flex;
    height: 17px;
    background: #f8f8f4;
`;

const ScrollButton = styled.button`
    display: flex;
    align-items: center;
    justify-content: center;
    width: 17px;
    height: 17px;
    border: 1px solid #fff;
    border-radius: 3px;
    background: linear-gradient(135deg, #dce6fe, #b4c8f6);
    box-shadow: inset 0 0 0 1px #b8cbf6;
`;

const ScrollFill = styled.div`
    flex: 1;
`;

const thumb = css`
    display: flex;
    align-items: center;
    justify-content: center;
    gap: 1px;
    border: 1px solid #98b0e8;
    border-radius: 2px;
    background: #c6d5fc;
`;

const VThumb = styled.div`
    ${thumb}
    flex-direction: column;
    height: 37px;

    i {
        width: 7px;
        height: 1px;
        background: #8ca8e8;
    }
`;

const HThumb = styled.div`
    ${thumb}
    width: 30%;

    i {
        width: 1px;
        height: 7px;
        background: #8ca8e8;
    }
`;

const Splitter = styled.div`
    flex: none;
    height: 9px;
    background: linear-gradient(#716f64 1px, #ece9d8 1px 2px, #fff 2px 4px, #ece9d8 4px 6px, #aca899 6px 7px, #ece9d8 7px);
`;

const Plot = styled.svg`
    flex: 1 1 0;
    width: 100%;
    min-height: 0;
    background: #000;
`;

const AxisLabel = styled.text`
    font-family: "Liberation Sans", Arial, sans-serif;
    font-size: 11px;
    fill: #fff;
    text-anchor: ${(p) => (p.$end ? 'end' : 'middle')};
`;

const Legend = styled.text`
    font-family: "Liberation Sans", Arial, sans-serif;
    font-size: 11px;
`;

const SheetTabs = styled.div`
    display: flex;
    flex: none;
    height: 28px;
    padding-top: 6px;
    border-bottom: 1px solid #fff;
    background: linear-gradient(#ece9d8 1px, #fff 1px 3px, #ece9d8 3px);
`;

const SheetEdge = styled.div`
    width: 9px;
    border-top: 1px solid #000;
`;

const SheetRest = styled.div`
    flex: 1;
    border-top: 1px solid #000;
`;

const SheetTab = styled.button`
    position: relative;
    height: 16px;
    padding: 0 5px;
    background: none;
    white-space: nowrap;

    &::before, &::after {
        content: "";
        position: absolute;
        top: 0;
        bottom: 0;
        width: 50%;
        border-bottom: 1px solid #000;
    }

    &::before {
        left: 2px;
        border-left: 1px solid #000;
        transform: skewX(18deg);
    }

    &::after {
        right: 2px;
        border-right: 1px solid #000;
        transform: skewX(-18deg);
    }
`;

const StatusBar = styled.footer`
    display: flex;
    gap: 2px;
    flex: none;
    height: 17px;
    border-bottom: 1px solid #fff;
`;

const StatusCell = styled.div`
    flex: ${(p) => (p.$small ? '0 0 50px' : '1')};
    border: 1px solid;
    border-color: #aca899 #fff #fff #aca899;
`;

const TaskBar = styled.div`
    display: flex;
    align-items: center;
    gap: 2px;
    flex: none;
    height: 30px;
    color: #fff;
    background: linear-gradient(#3a80f0 0, #245edb 4px, #2560e0 24px, #1c48b0);
`;

const StartButton = styled.button`
    display: flex;
    align-items: center;
    gap: 5px;
    width: 98px;
    height: 30px;
    margin-right: 8px;
    padding-left: 10px;
    border-radius: 0 10px 12px 0;
    background: linear-gradient(#68b468 0, #3c963c 4px, #389838 22px, #2c7c2c);
    box-shadow: inset -3px 0 4px #2a702a;
    font-size: 17px;
    font-style: italic;
    font-weight: bold;
    text-shadow: 1px 1px 1px #1c401c;
`;

const TaskButton = styled.button`
    display: flex;
    align-items: center;
    gap: 3px;
    width: 159px;
    height: 25px;
    padding-left: 10px;
    border-radius: 3px;
    background: ${(p) => (p.$active ? '#1c50b8' : 'linear-gradient(#5a98fc, #3c80f4 4px)')};
    box-shadow: ${(p) => (p.$active ? 'inset 1px 1px 1px #123a90' : 'none')};
    white-space: nowrap;
`;

const Language = styled.div`
    margin-left: auto;
    padding-right: 19px;
`;

const Tray = styled.div`
    display: flex;
    align-items: center;
    justify-content: space-between;
    width: 146px;
    height: 30px;
    padding: 0 16px 0 10px;
    border-left: 1px solid #0c4090;
    background: linear-gradient(#38b4f8 0, #1290e8 4px, #1492ec 24px, #0c70c0);
    box-shadow: inset 1px 0 #50c0f8;
`;
